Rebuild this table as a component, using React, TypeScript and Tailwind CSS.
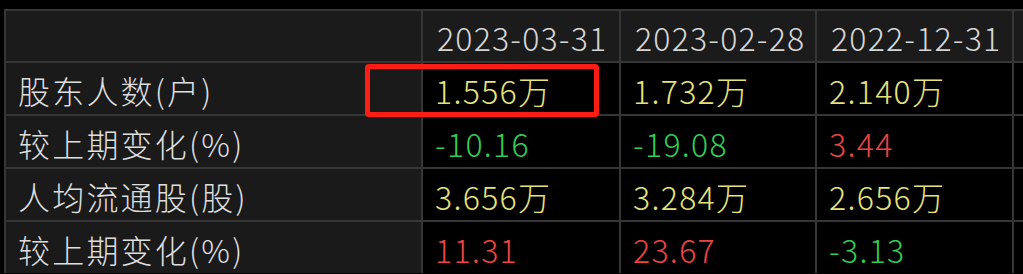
import { FC } from 'react';

type Tone = 'yellow' | 'green' | 'red';

const toneClass: Record<Tone, string> = {
  yellow: 'text-[#e6e27a]',
  green: 'text-[#31cd55]',
  red: 'text-[#ec4444]',
};

const dates = ['2023-03-31', '2023-02-28', '2022-12-31'];

const rows: Array<{ label: string; cells: Array<{ v: string; tone: Tone }> }> = [
  {
    label: '股东人数(户)',
    cells: [
      { v: '1.556万', tone: 'yellow' },
      { v: '1.732万', tone: 'yellow' },
      { v: '2.140万', tone: 'yellow' },
    ],
  },
  {
    label: '较上期变化(%)',
    cells: [
      { v: '-10.16', tone: 'green' },
      { v: '-19.08', tone: 'green' },
      { v: '3.44', tone: 'red' },
    ],
  },
  {
    label: '人均流通股(股)',
    cells: [
      { v: '3.656万', tone: 'yellow' },
      { v: '3.284万', tone: 'yellow' },
      { v: '2.656万', tone: 'yellow' },
    ],
  },
  {
    label: '较上期变化(%)',
    cells: [
      { v: '11.31', tone: 'red' },
      { v: '23.67', tone: 'red' },
      { v: '-3.13', tone: 'green' },
    ],
  },
];

const App: FC = () => {
  return (
    <div className="relative w-[1023px] h-[274px] overflow-hidden bg-black font-['Noto_Sans_CJK_SC','Liberation_Sans',sans-serif] text-[32px] font-light leading-none">
      <div className="mt-[9px] ml-[4px] pl-[2px] pt-[2px] bg-[#363636] grid grid-cols-[415px_196px_194px_195px_1fr] grid-rows-[50px_51px_51px_51px_51px] gap-[2px]">
        {/* header */}
        <div className="bg-[#1b1b1b]" />
        {dates.map((d) => (
          <div key={d} className="bg-[#1b1b1b] flex items-center pl-[14px] pt-[2px] tracking-[1.2px] text-[#d6d6d6]">
            {d}
          </div>
        ))}
        <div className="bg-[#1b1b1b]" />

        {rows.map((row, i) => (
          <div key={i} className="contents">
            <div className="bg-[#1a1a1a] flex items-center pl-[12px] pt-[2px] tracking-[2.2px] text-[#dedede]">{row.label}</div>
            {row.cells.map((c, j) => (
              <div key={j} className={`bg-black flex items-center pl-[12px] pt-[2px] tracking-[1.3px] ${toneClass[c.tone]}`}>
                {c.v}
              </div>
            ))}
            <div className="bg-black" />
          </div>
        ))}
      </div>

      {/* highlight box */}
      <div className="absolute left-[365px] top-[64px] w-[234px] h-[53px] border-[5px] border-[#ff1c14] rounded-[4px]" />
    </div>
  );
};

export default App;
